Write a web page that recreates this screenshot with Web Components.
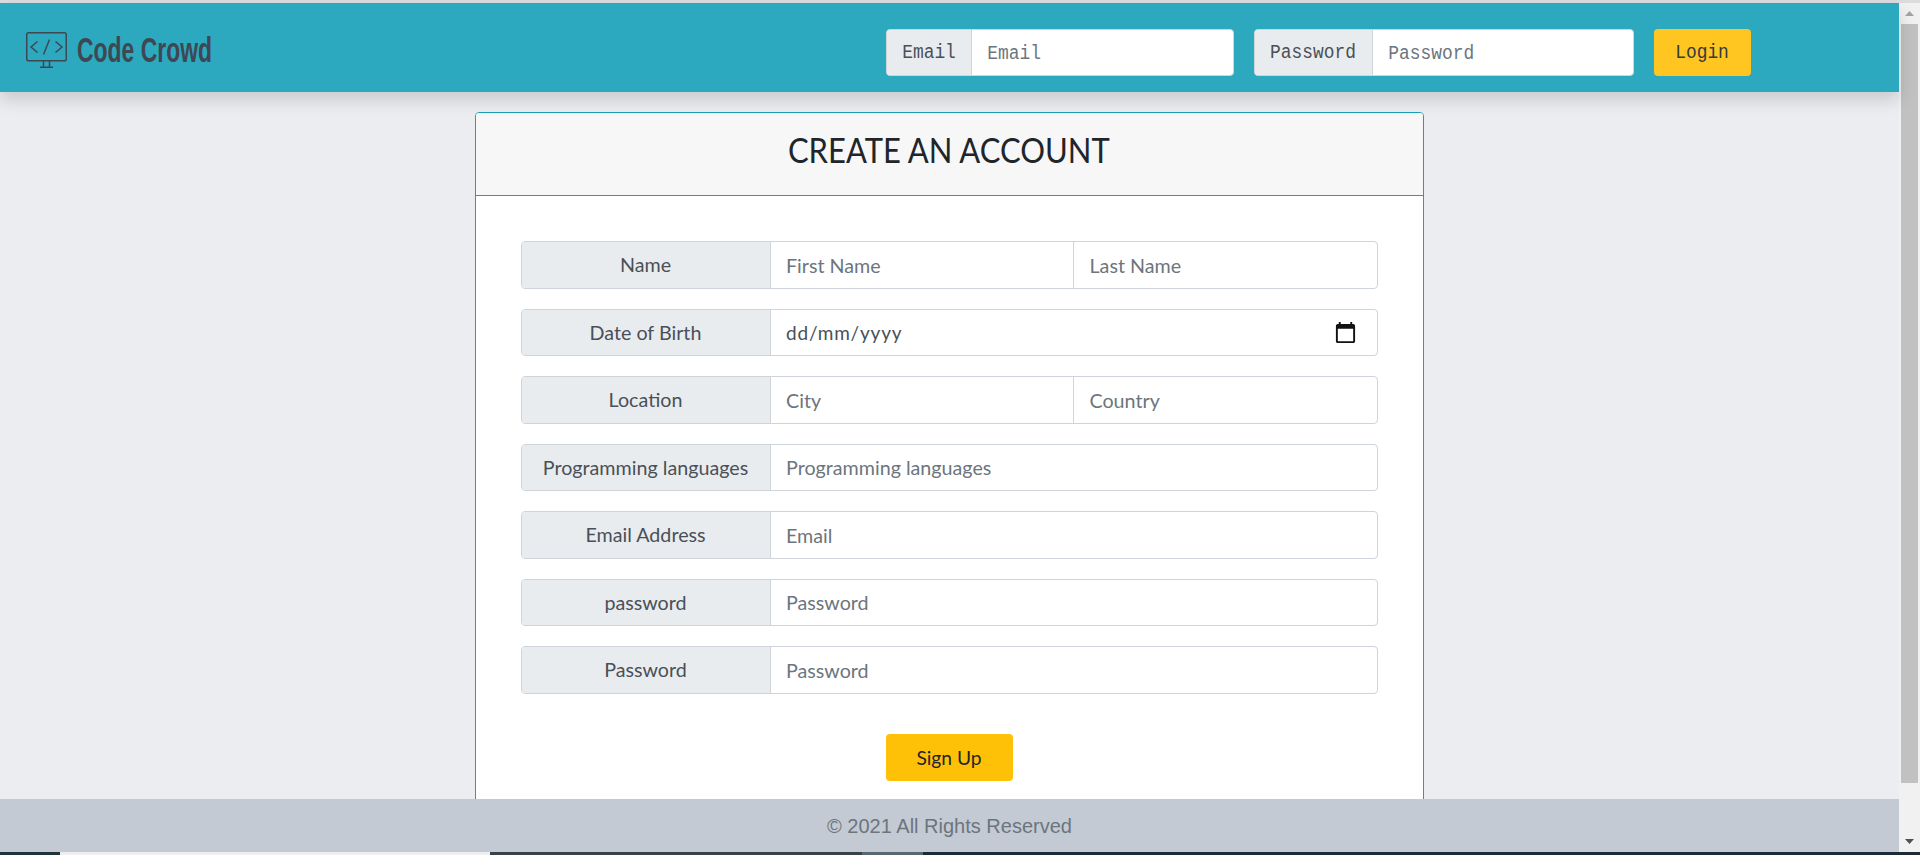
<!DOCTYPE html>
<html lang="en">
<head>
<meta charset="utf-8">
<title>Code Crowd</title>
<style>
html,body{margin:0;padding:0;height:100%;overflow:hidden;background:#ebedf1}
body{font-family:"Lato","Liberation Sans",sans-serif}
</style>
</head>
<body>
<app-page>
  <nav-bar slot="nav"></nav-bar>
  <signup-card slot="main">
    <form-row label="Name"><text-box hint="First Name"></text-box><text-box hint="Last Name"></text-box></form-row>
    <form-row label="Date of Birth"><date-box></date-box></form-row>
    <form-row label="Location"><text-box hint="City"></text-box><text-box hint="Country"></text-box></form-row>
    <form-row label="Programming languages"><text-box hint="Programming languages"></text-box></form-row>
    <form-row label="Email Address"><text-box hint="Email"></text-box></form-row>
    <form-row label="password"><text-box hint="Password"></text-box></form-row>
    <form-row label="Password"><text-box hint="Password"></text-box></form-row>
  </signup-card>
  <page-footer slot="footer"></page-footer>
</app-page>
<script>
function shadow(el,html){el.attachShadow({mode:'open'}).innerHTML=html}
const TITLE='"Lato","Noto Sans",sans-serif';

customElements.define('app-page',class extends HTMLElement{constructor(){super();shadow(this,`
<style>
:host{display:flex;flex-direction:column;height:855px;width:1920px;overflow:hidden;background:#ebedf1}
.top{height:3px;background:#dcdcde;flex:none}
.mid{flex:1;display:flex;min-height:0}
.main{flex:1;min-width:0;display:flex;flex-direction:column}
.scroll{flex:1;min-height:0;overflow:hidden;display:flex;justify-content:center;padding:20px 1px 0 0}
.foot{flex:none}
</style>
<div class="top"></div>
<div class="mid">
  <div class="main">
    <slot name="nav"></slot>
    <div class="scroll"><slot name="main"></slot></div>
    <div class="foot"><slot name="footer"></slot></div>
  </div>
  <scroll-bar></scroll-bar>
</div>
<task-strip></task-strip>`)}});

customElements.define('scroll-bar',class extends HTMLElement{constructor(){super();shadow(this,`
<style>
:host{display:flex;flex-direction:column;align-items:center;flex:none;width:21px;background:#f1f1f1}
.btn{height:21px;width:21px;display:flex;align-items:center;justify-content:center;flex:none}
.thumb{width:17px;height:759px;background:#c1c1c1;flex:none}
.sp{flex:1}
svg{display:block}
</style>
<div class="btn"><svg width="9" height="5" viewBox="0 0 9 5"><path d="M4.5 0L9 5H0z" fill="#a3a3a3"/></svg></div>
<div class="thumb"></div><div class="sp"></div>
<div class="btn" style="height:22px"><svg width="9" height="5" viewBox="0 0 9 5"><path d="M0 0h9L4.5 5z" fill="#505050"/></svg></div>`)}});

customElements.define('task-strip',class extends HTMLElement{constructor(){super();shadow(this,`
<style>
:host{display:flex;height:3px;flex:none;background:#1e2a38}
i{display:block;height:3px}
</style>
<i style="width:60px;background:#22323c"></i><i style="width:430px;background:#eeeeee"></i><i style="width:372px;background:#37424a"></i><i style="width:61px;background:#5a6670"></i><i style="flex:1;background:#1e2a38"></i>`)}});

customElements.define('nav-bar',class extends HTMLElement{constructor(){super();shadow(this,`
<style>
:host{display:flex;align-items:center;flex:none;height:89px;background:#2ca9bf;box-shadow:0 8px 16px rgba(0,0,0,.15);position:relative;z-index:2;padding:10px 148px 0 26px;box-sizing:border-box}
.logo{display:flex;align-items:center;gap:10px;color:#3f4753;margin-top:-6px}
.logo svg{display:block;flex:none}
.name{display:inline-block;font:700 35px/1 "Liberation Sans",sans-serif;transform:scaleX(.655);transform-origin:0 50%;white-space:nowrap}
.form{margin-left:auto;display:flex;align-items:center}
nav-field{margin-right:20px}
button{all:unset;box-sizing:border-box;width:97px;height:47px;background:#ffc520;border-radius:4px;text-align:center;font:20px/48px "Liberation Mono",monospace;color:#343a40}
button span{display:inline-block;transform:scaleX(.895)}
</style>
<div class="logo">
<svg width="41" height="36" viewBox="0 0 41 36" fill="none" stroke="currentColor" stroke-width="1.5">
<rect x=".75" y=".75" width="39.5" height="28" rx="1.8"/>
<path d="M17.5 29v6M23.5 29v6M14 35.25h13"/>
<path d="M11.5 9.5L5 15l6.5 5.5M29.5 9.5L36 15l-6.5 5.5M23.5 7.5l-6 15"/>
</svg>
<span class="name">Code Crowd</span>
</div>
<div class="form">
<nav-field label="Email" hint="Email" lw="85" w="348"></nav-field>
<nav-field label="Password" hint="Password" lw="118" w="380"></nav-field>
<button type="button"><span>Login</span></button>
</div>`)}});

customElements.define('nav-field',class extends HTMLElement{constructor(){super();const a=n=>this.getAttribute(n);shadow(this,`
<style>
:host{display:flex;height:47px;box-sizing:border-box;width:${a('w')}px;border:1px solid #ced4da;border-radius:4px;background:#fff;overflow:hidden;font:20px/1 "Liberation Mono",monospace}
.l{width:${a('lw')-1}px;flex:none;background:#e9ecef;border-right:1px solid #ced4da;display:flex;align-items:center;justify-content:center;color:#495057}
.l span{display:inline-block;transform:scaleX(.895)}
input{all:unset;flex:1;min-width:0;padding:1px 17px 0;font:inherit;transform:scaleX(.895);transform-origin:0 50%}
input::placeholder{color:#6c757d;opacity:1}
</style>
<div class="l"><span>${a('label')}</span></div><input type="text" placeholder="${a('hint')}">`)}});

customElements.define('signup-card',class extends HTMLElement{constructor(){super();shadow(this,`
<style>
:host{display:block;flex:none;align-self:flex-start;width:949px;box-sizing:border-box;border:1px solid #17a2b8;border-radius:4px;background:#fff;font-family:${TITLE}}
header{height:72px;padding-bottom:10px;box-sizing:content-box;background:#f7f7f7;border-bottom:1px solid #17a2b8;border-radius:3px 3px 0 0;display:flex;align-items:center;justify-content:center;font-size:35px;color:#212529}
header span{display:inline-block;transform:scaleX(.885)}
.body{padding:45px 45px 40px;display:flex;flex-direction:column;gap:20px}
.act{display:flex;justify-content:center;margin-top:20px}
button{all:unset;box-sizing:border-box;width:127px;height:47px;background:#ffc107;border-radius:4px;text-align:center;font:19.2px/47px ${TITLE};color:#212529}
</style>
<header><span>CREATE AN ACCOUNT</span></header>
<div class="body"><slot></slot><div class="act"><button type="button">Sign Up</button></div></div>`)}});

customElements.define('form-row',class extends HTMLElement{constructor(){super();shadow(this,`
<style>
:host{display:flex;height:47.5px;box-sizing:border-box;border:1px solid #ced4da;border-radius:4px;overflow:hidden;font:19.7px/1 ${TITLE};background:#fff}
.l{flex:none;width:249px;box-sizing:border-box;background:#e9ecef;border-right:1px solid #ced4da;display:flex;align-items:center;justify-content:center;color:#495057;white-space:nowrap;padding-top:1px}
.f{flex:1;display:flex;min-width:0}
::slotted(text-box:nth-child(n+2)){border-left:1px solid #ced4da}
</style>
<span class="l">${this.getAttribute('label')}</span><div class="f"><slot></slot></div>`)}});

customElements.define('text-box',class extends HTMLElement{constructor(){super();shadow(this,`
<style>
:host{display:flex;flex:1;min-width:0}
input{all:unset;flex:1;min-width:0;padding:1px 15.5px 0;font:inherit}
input::placeholder{color:#6c757d;opacity:1}
</style>
<input type="text" placeholder="${this.getAttribute('hint')}">`)}});

customElements.define('date-box',class extends HTMLElement{constructor(){super();shadow(this,`
<style>
:host{display:flex;flex:1;align-items:center;justify-content:space-between;padding:0 20px 0 15.5px;color:#495057;font-size:19px;letter-spacing:.8px}
svg{display:block}
</style>
<span>dd/mm/yyyy</span>
<svg width="23" height="23" viewBox="0 0 24 24"><path fill="#111" d="M20 3h-1V1h-2v2H7V1H5v2H4c-1.1 0-2 .9-2 2v16c0 1.1.9 2 2 2h16c1.1 0 2-.9 2-2V5c0-1.1-.9-2-2-2zm0 18H4V8h16v13z"/></svg>`)}});

customElements.define('page-footer',class extends HTMLElement{constructor(){super();shadow(this,`
<style>
:host{display:flex;align-items:center;justify-content:center;height:53px;background:#c3cad4;color:#6c757d;font:20px/1 "Liberation Sans",sans-serif}
</style>
<span>© 2021 All Rights Reserved</span>`)}});
</script>
</body>
</html>
